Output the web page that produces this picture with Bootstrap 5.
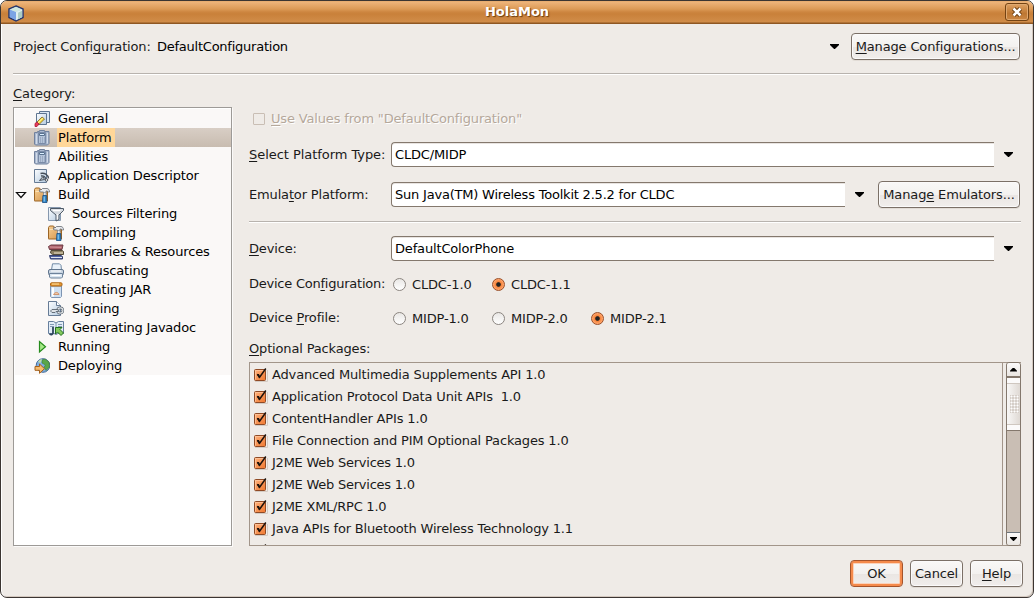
<!DOCTYPE html>
<html lang="en">
<head>
<meta charset="utf-8">
<meta name="viewport" content="width=device-width, initial-scale=1">
<title>HolaMon</title>
<link rel="stylesheet" href="https://cdn.jsdelivr.net/npm/bootstrap@5.3.0/dist/css/bootstrap.min.css">
<style>
  body { font: 13px/19px "DejaVu Sans", sans-serif; letter-spacing: -.16px; color: #1a1a1a; background: #fff; overflow: hidden; }
  u { text-decoration-thickness: 1px; text-underline-offset: 2px; text-decoration-skip-ink: none; }
  .tight { letter-spacing: -.24px; }
  .loose { letter-spacing: -.05px; }
  .win { width: 1034px; height: 598px; background: #efebe7; border: 1px solid #3b3532; border-radius: 7px; overflow: hidden; box-shadow: inset 1px 0 #fff, inset -1px -1px #d3c8bf; }
  .titlebar { height: 23px; margin: 0 -1px; padding: 0 5px 0 8px; background: linear-gradient(#e2a768 0, #eeb47a 1px, #dc9a56 8px, #cd8640 11px, #c9813a 13px, #d18d49 21px, #8f5722 22px); }
  .titlebar h1 { font-size: 13px; line-height: 22px; letter-spacing: 0; padding-left: 5px; color: #fff; text-shadow: 1px 1px 1px #6b3d10; }
  .closebtn { width: 24px; height: 18px; margin-top: 2px; border: 1px solid #744313; border-radius: 3px; background: linear-gradient(#dfa263, #bd7732 60%, #cc8845); box-shadow: inset 0 0 0 1px #e0a970; }
  .rule { height: 2px; background: linear-gradient(#b8b3ae 50%, #fff 50%); }
  .gbtn { font-size: 13px; line-height: 19px; letter-spacing: -.14px; padding: 0; height: 27px; border: 1px solid #7b7067; border-radius: 4px; color: #1a1a1a; background: linear-gradient(#f9f8f7, #f3f1ef 50%, #eae6e3 54%, #f1eeec); box-shadow: inset 0 0 0 1px #fbfafa, 0 1px #e2dcd6; }
  .gbtn.primary { border: 1px solid #a4532b; box-shadow: inset 0 0 0 2px #f58a4b, inset 0 0 0 3px #fbd2ba; }
  .arrow { width: 9px; height: 5px; background: #000; clip-path: polygon(0 0, 100% 0, 100% 20%, 55% 100%, 45% 100%, 0 20%); }
  .head { height: 27px; margin-top: 9px; width: 1007px; }
  .tree { width: 219px; height: 439px; border: 1px solid #9d9a97; background: #fff; padding: 1px 0 0 1px; box-shadow: 1px 1px #fbfaf9; }
  .trow { height: 19px; padding-left: 19px; background: #faf8f7; color: #000; }
  .trow.sub { padding-left: 33px; }
  .trow svg { width: 16px; height: 16px; margin-right: 7px; flex: none; }
  .trow span { padding: 0 2px 0 1px; line-height: 19px; }
  .trow.sel { background: linear-gradient(#d8cec5, #c8bcb0); }
  .trow.sel span { background: #ffd799; padding-right: 3px; }
  .trow svg.twist { width: 12px; height: 8px; margin: 0 7px 0 -19px; }
  .rightcol { width: 772px; margin-left: 17px; }
  .lab { width: 142px; flex: none; }
  .combo { height: 25px; border: 1px solid #84786d; border-right: 0; border-radius: 4px 0 0 4px; background: #fff; padding-left: 3px; line-height: 23px; color: #000; box-shadow: inset 0 1px #e8e4e1; }
  .arr { width: 27px; display: flex; justify-content: center; align-items: center; padding-left: 2px; }
  .opt { width: 99px; padding-left: 2px; gap: 6px; height: 19px; padding-top: 1px; }
  .rad { width: 13px; height: 13px; border: 1px solid #8b8580; border-radius: 50%; background: linear-gradient(#e9e7e5, #fff); flex: none; }
  .rad.on { border-color: #9a4f28; background: radial-gradient(circle, #222 0 1.8px, #f5843c 2.8px, #ffa267 5px); }
  .dis { height: 23px; color: #b5a89b; text-shadow: 1px 1px #fff; }
  .dbox { width: 12px; height: 12px; border: 1px solid #c9beb4; border-radius: 1px; margin: 1px 6px 0 4px; }
  .pkgs { width: 772px; height: 184px; border: 1px solid #a2958a; border-right: 0; }
  .pkglist { width: 753px; border-right: 1px solid #a2958a; padding-left: 3px; overflow: hidden; padding-top: 1px; }
  .pk { height: 22px; line-height: 22px; white-space: pre; }
  .pk svg { width: 15px; height: 15px; margin: 0 4px 2px 0; flex: none; }
  .sbar { width: 15px; margin: -1px 0 -1px 3px; border: 1px solid #84786d; border-radius: 3px; background: #c9beb4; overflow: hidden; }
  .sbtn { height: 13px; background: linear-gradient(#fbfafa, #eae6e2); display: flex; align-items: center; justify-content: center; }
  .sbtn .arrow { width: 7px; height: 4px; }
  .sbtn .up { clip-path: polygon(45% 0, 55% 0, 100% 80%, 100% 100%, 0 100%, 0 80%); }
  .thumb { height: 55px; border: solid #84786d; border-width: 2px 0 1px; background: linear-gradient(#fbfafa 5px, #cfc7c0 5px 6px, transparent 6px 46px, #cfc7c0 46px 47px, #fbfafa 47px), linear-gradient(90deg, #f8f7f6, #dfd9d4); padding: 17px 0 0 3px; }
  .grip { width: 9px; height: 18px; background: radial-gradient(circle, #fff 0.9px, transparent 1.1px) 0 0/3px 3px, #d5cec8; }
  .foot { gap: 7px; margin: 14px 10px 0 0; }
  .foot .gbtn { width: 53px; }
</style>
</head>
<body>
<svg class="position-absolute" width="0" height="0" xmlns="http://www.w3.org/2000/svg">
  <defs>
    <linearGradient id="gb" x2="1" y2="1"><stop stop-color="#fdfeff"/><stop offset="1" stop-color="#b5cbe0"/></linearGradient>
    <linearGradient id="go" x2="1" y2="1"><stop stop-color="#f8cf92"/><stop offset="1" stop-color="#d2924a"/></linearGradient>
    <linearGradient id="gc" x2="1" y2="1"><stop stop-color="#ffb27d"/><stop offset="1" stop-color="#f0782f"/></linearGradient>
  </defs>
  <symbol id="phone" viewBox="0 0 16 16"><path d="M.5 2.500h3v-1h2v-1h5v1h4.500v12l-1.500 1.500h-12l-1-1z" fill="#aab9d0" stroke="#71819d"/><path d="M2.500 4v10M13.500 3v10.500" stroke="#d2dbe8"/><path d="M4.500 2.500h7v11h-7z" fill="#b6c5da" stroke="#7a8ba7"/><path d="M5.500 3.500h5v2h-5z" fill="#dceeff" stroke="#58718e"/><path d="M6 8h1M8 8h1M10 8h1M6 10h1M8 10h1M10 10h1M6 12h1M8 12h1M10 12h1" stroke="#8191ac"/></symbol>
  <symbol id="hammer" viewBox="0 0 16 16"><path d="M.5 13.500v-11l1-1.500h4l1 1.500h7v11.500h-13z" fill="url(#go)" stroke="#9b6424"/><path d="M1.500 4.500h4" stroke="#fbe0b4"/><path d="M5.500 4.500V2.500L7 3l1.500-1.500h4.500c1.500.2 2.500 1.300 2.500 3.500h-1L13 4h-1v3H9.500V5H7z" fill="#e9ebee" stroke="#666b72" stroke-width=".8"/><path d="M9.500 5.500H12v4H9.500z" fill="#e2e5e9" stroke="#7b7f86" stroke-width=".6"/><path d="M8.900 8.500h3.700l.4 7H8.500z" fill="#2e86c6" stroke="#174d83" stroke-width=".8"/><path d="M10.200 9.500v5" stroke="#9fd3f5"/></symbol>
  <symbol id="tick" viewBox="0 0 15 15"><path d="M2 14.500h12.500V3" fill="none" stroke="#d4ccc5"/><rect x="1.500" y="2.500" width="11" height="11" rx="1" fill="url(#gc)" stroke="#8f4a25"/><path d="M2.500 12.500v-9h9" fill="none" stroke="#ffd0ad" opacity=".6"/><path d="M4.300 7.300 6.600 10.300 12.800 1.500" fill="none" stroke="#1c120c" stroke-width="1.500"/><path d="m4 7 2 0 1 2.500-1 1.800z" fill="#1c120c"/></symbol>
</svg>

<div class="win d-flex flex-column">
  <header class="titlebar d-flex">
    <svg width="16" height="18" viewBox="0 0 16 18" class="mt-1"><path d="M8 1 15 4v8.500L8 16 1 12.500V4z" fill="#b8cdec" stroke="#27366a" stroke-width="1.500"/><path d="M1.800 4.500 8 6.700v8.500l-6.200-3.100z" fill="#7ba4e4"/><path d="M8 6.700l6.200-2.200v7.600L8 15.200z" fill="#e0efee"/><path d="M10 7.700v6.500l4-2.300V5.800z" fill="#adcdc4"/><path d="M1.800 4.400 8 1.800l6.200 2.600L8 6.900z" fill="#cfe7e0"/></svg>
    <h1 class="flex-grow-1 text-center fw-bold mb-0">HolaMon</h1>
    <button class="closebtn p-0 d-flex align-items-center justify-content-center" aria-label="Close"><svg width="12" height="12" viewBox="0 0 12 12"><path d="m2.500 2.500 7 7m0-7-7 7" stroke="#6b3d10" stroke-width="4.500"/><path d="m2.500 2.500 7 7m0-7-7 7" stroke="#fff" stroke-width="2.500"/></svg></button>
  </header>

  <main class="flex-grow-1" style="padding-left:12px">
    <div class="head d-flex align-items-center">
      <span style="width:144px">Project Confi<u>g</u>uration:</span><span class="text-black tight">DefaultConfiguration</span>
      <span class="arrow ms-auto"></span>
      <button class="gbtn" style="width:169px;margin-left:12px"><u>M</u>anage Configurations...</button>
    </div>
    <div class="rule" style="width:1007px;margin-top:13px"></div>
    <div class="loose" style="margin-top:9px;height:19px"><u>C</u>ategory:</div>

    <div class="d-flex" style="margin-top:4px">
      <nav class="tree">
        <div class="trow d-flex align-items-center"><svg viewBox="0 0 16 16"><path d="M5.500.5h10v11h-10z" fill="#dbe7f3" stroke="#5e7591"/><path d="M2.500 2.500h10v11h-10z" fill="url(#gb)" stroke="#5e7591"/><path d="m3 11 5-5 2.500 2L5 13.500z" fill="#f7d93e" stroke="#7b6320" stroke-width=".8"/><path d="m3.800 12 5-5" stroke="#fff6a8"/><path d="m1 12.500 2-1.500 2 2-2 2.500H1z" fill="#e83e58" stroke="#a91c38" stroke-width=".8"/></svg><span>General</span></div>
        <div class="trow sel d-flex align-items-center"><svg><use href="#phone"/></svg><span>Platform</span></div>
        <div class="trow d-flex align-items-center"><svg><use href="#phone"/></svg><span>Abilities</span></div>
        <div class="trow d-flex align-items-center"><svg viewBox="0 0 16 16"><path d="M.5 1.500h12v13H.5z" fill="url(#gb)" stroke="#667b95"/><path d="M6.500 5.500c4-1 7.500 1 8 5M7 8c2.500-.5 4.500.5 5 3.500" fill="none" stroke="#444d57" stroke-width="1.300"/><path d="M5.500 12.500 9 8.500l1.500 3z" fill="#b8c0c8" stroke="#505860"/><circle cx="12.500" cy="12" r="1.300" fill="#eee" stroke="#505860"/></svg><span>Application Descriptor</span></div>
        <div class="trow d-flex align-items-center"><svg class="twist" viewBox="0 0 12 8"><path d="M1.500 1.500h9L6 6.500z" fill="#fff" stroke="#111" stroke-width="1.200"/></svg><svg><use href="#hammer"/></svg><span>Build</span></div>
        <div class="trow sub d-flex align-items-center"><svg viewBox="0 0 16 16"><path d="M.5 1.500h12v13H.5z" fill="url(#gb)" stroke="#8698ae"/><path d="M2.500 2.500h13v2L11 9v4.500l-3 1.500V9L2.500 4.500z" fill="#d4d9df" stroke="#4c5866"/><path d="M4 3.700h9.500l-2 1.500h-6z" fill="#fff"/><path d="M9.300 8v5.500" stroke="#fff"/></svg><span>Sources Filtering</span></div>
        <div class="trow sub d-flex align-items-center"><svg><use href="#hammer"/></svg><span>Compiling</span></div>
        <div class="trow sub d-flex align-items-center"><svg viewBox="0 0 16 16"><path d="M.5 2.500 3 1h12l-1 4.500H1.500z" fill="#a95d66" stroke="#6b3a42"/><path d="m1.500 3 12 .3" stroke="#d69ba2"/><path d="M3 6.500h11.500l1 1v3H4.500L2.500 9z" fill="#8e8263" stroke="#554c3a"/><path d="M6 9h9" stroke="#eee5cd"/><path d="M1.500 11.500h11.500l1.500 1v2.500H2.500z" fill="#5265a2" stroke="#35406e"/><path d="M3 13.500h11" stroke="#e0e5f0"/></svg><span>Libraries &amp; Resources</span></div>
        <div class="trow sub d-flex align-items-center"><svg viewBox="0 0 16 16"><path d="M3.500 7 4.500.8h7l1.500 1.500.5 5z" fill="#e9f1f9" stroke="#718aa5"/><rect x=".5" y="6.500" width="15" height="5.500" rx="1.500" fill="#c8d4e1" stroke="#60758d"/><path d="M3 8h10" stroke="#fff"/><path d="M1.500 10.500h13v3.500l-1 1h-11l-1-1z" fill="#dae6f1" stroke="#6d829a"/><path d="M3.500 12.500h9" stroke="#fff"/></svg><span>Obfuscating</span></div>
        <div class="trow sub d-flex align-items-center"><svg viewBox="0 0 16 16"><path d="M2.500 4h11v10.500l-1 1h-9l-1-1z" fill="#cfe0f2" stroke="#7d94b2"/><path d="M5 5.500v9" stroke="#fff" stroke-width="2"/><rect x="2.500" y=".8" width="11.500" height="3.200" rx="1" fill="#e59a36" stroke="#ad6413"/><path d="M4 2h7" stroke="#ffe0a0"/><path d="M5.500 12.500C7 9.500 10.500 10 11 12.500z" fill="#f5c8a6" stroke="#c9875b" stroke-width=".8"/></svg><span>Creating JAR</span></div>
        <div class="trow sub d-flex align-items-center"><svg viewBox="0 0 16 16"><path d="M.5.500h8l4 4v10H.5z" fill="url(#gb)" stroke="#667b95"/><path d="M8.500.5v4h4" fill="#fff" stroke="#667b95"/><circle cx="12.300" cy="9.500" r="2.600" fill="none" stroke="#59636d" stroke-width="2.600"/><circle cx="12.300" cy="9.500" r="2.600" fill="none" stroke="#dfe3e7" stroke-width="1.200"/><path d="M10 8.500H4L2.500 10 4 11.500h3l1-1h2.500z" fill="#dfe3e7" stroke="#59636d" stroke-width=".9"/></svg><span>Signing</span></div>
        <div class="trow sub d-flex align-items-center"><svg viewBox="0 0 16 16"><path d="M.5 1.500h5L8 3l2.500-1.500h5v12H10L8 14.500l-2-1H.5z" fill="#e3edf7" stroke="#667f9d"/><path d="M8 3v11M2 4.500h4M2 6.500h4M10 4.500h4M10 6.500h4" stroke="#839ab4"/><path d="M5 7v5.500c0 2-1.500 2.500-3.500 1.500" fill="none" stroke="#2f465e" stroke-width="1.800"/><path d="M7.500 7.500h6.500l-2 2 3.500 3.500-2.500 2.500L9.500 12l-2 2z" fill="#83c95c" stroke="#24711e"/></svg><span style="letter-spacing:-.22px">Generating Javadoc</span></div>
        <div class="trow d-flex align-items-center"><svg viewBox="0 0 16 16"><path d="M5.500 2.500v10.500l6-5.200z" fill="#a6e987" stroke="#258b1b" stroke-width="1.200"/></svg><span>Running</span></div>
        <div class="trow d-flex align-items-center"><svg viewBox="0 0 16 16"><circle cx="9" cy="7.500" r="6.800" fill="#7faee0" stroke="#436a98"/><path d="m8 2 3-1 4 3 .5 5-3.500 3.500L10 9l1.500-2L8 5z" fill="#5aa649" stroke="#3c7f35" stroke-width=".6"/><path d="M4 4c1-2 3-3 4-2.500L6.500 5z" fill="#bcdfae"/><path d="M1 8.500h4.500V6l5 4.700-5 4.600v-3H1z" fill="#f9bd6c" stroke="#a5611b"/></svg><span>Deploying</span></div>
      </nav>

      <section class="rightcol">
        <div class="d-flex align-items-center dis"><span class="dbox"></span><span><u>U</u>se Values from "DefaultConfiguration"</span></div>
        <div class="d-flex" style="margin-top:12px"><span class="lab loose"><span class="d-block" style="margin-top:3px"><u>S</u>elect Platform Type:</span></span><div class="combo flex-grow-1">CLDC/MIDP</div><div class="arr"><span class="arrow"></span></div></div>
        <div class="d-flex align-items-center" style="margin-top:14px;height:27px"><span class="lab">Emula<u>t</u>or Platform:</span><div class="combo" style="width:454px;letter-spacing:-.21px">Sun Java(TM) Wireless Toolkit 2.5.2 for CLDC</div><div class="arr"><span class="arrow"></span></div><button class="gbtn" style="width:142px;margin-left:6px">Manag<u>e</u> Emulators...</button></div>
        <div class="rule" style="margin-top:13px"></div>
        <div class="d-flex" style="margin-top:13px"><span class="lab"><span class="d-block" style="margin-top:3px"><u>D</u>evice:</span></span><div class="combo flex-grow-1">DefaultColorPhone</div><div class="arr"><span class="arrow"></span></div></div>
        <div class="d-flex" style="margin-top:13px"><span class="lab tight">Device Con<u>f</u>iguration:</span>
          <div class="opt d-flex align-items-center"><span class="rad"></span>CLDC-1.0</div><div class="opt d-flex align-items-center"><span class="rad on"></span>CLDC-1.1</div></div>
        <div class="d-flex" style="margin-top:15px"><span class="lab">Device <u>P</u>rofile:</span>
          <div class="opt d-flex align-items-center"><span class="rad"></span>MIDP-1.0</div><div class="opt d-flex align-items-center"><span class="rad"></span>MIDP-2.0</div><div class="opt d-flex align-items-center"><span class="rad on"></span>MIDP-2.1</div></div>
        <div style="margin-top:12px;height:19px"><u>O</u>ptional Packages:</div>
        <div class="pkgs d-flex" style="margin-top:4px">
          <div class="pkglist">
            <div class="pk d-flex align-items-center"><svg><use href="#tick"/></svg>Advanced Multimedia Supplements API 1.0</div>
            <div class="pk d-flex align-items-center"><svg><use href="#tick"/></svg>Application Protocol Data Unit APIs  1.0</div>
            <div class="pk d-flex align-items-center"><svg><use href="#tick"/></svg>ContentHandler APIs 1.0</div>
            <div class="pk d-flex align-items-center"><svg><use href="#tick"/></svg>File Connection and PIM Optional Packages 1.0</div>
            <div class="pk d-flex align-items-center tight"><svg><use href="#tick"/></svg>J2ME Web Services 1.0</div>
            <div class="pk d-flex align-items-center tight"><svg><use href="#tick"/></svg>J2ME Web Services 1.0</div>
            <div class="pk d-flex align-items-center tight"><svg><use href="#tick"/></svg>J2ME XML/RPC 1.0</div>
            <div class="pk d-flex align-items-center"><svg><use href="#tick"/></svg>Java APIs for Bluetooth Wireless Technology 1.1</div>
            <div class="pk d-flex align-items-center"><svg><use href="#tick"/></svg>SIP API for J2ME 1.0</div>
          </div>
          <div class="sbar d-flex flex-column">
            <div class="sbtn"><span class="arrow up"></span></div>
            <div class="thumb"><div class="grip"></div></div>
            <div class="sbtn mt-auto border-top border-secondary"><span class="arrow"></span></div>
          </div>
        </div>
      </section>
    </div>
    <footer class="foot d-flex justify-content-end"><button class="gbtn primary">OK</button><button class="gbtn">Cancel</button><button class="gbtn"><u>H</u>elp</button></footer>
  </main>
</div>
<script src="https://cdn.jsdelivr.net/npm/bootstrap@5.3.0/dist/js/bootstrap.bundle.min.js"></script>
</body>
</html>
